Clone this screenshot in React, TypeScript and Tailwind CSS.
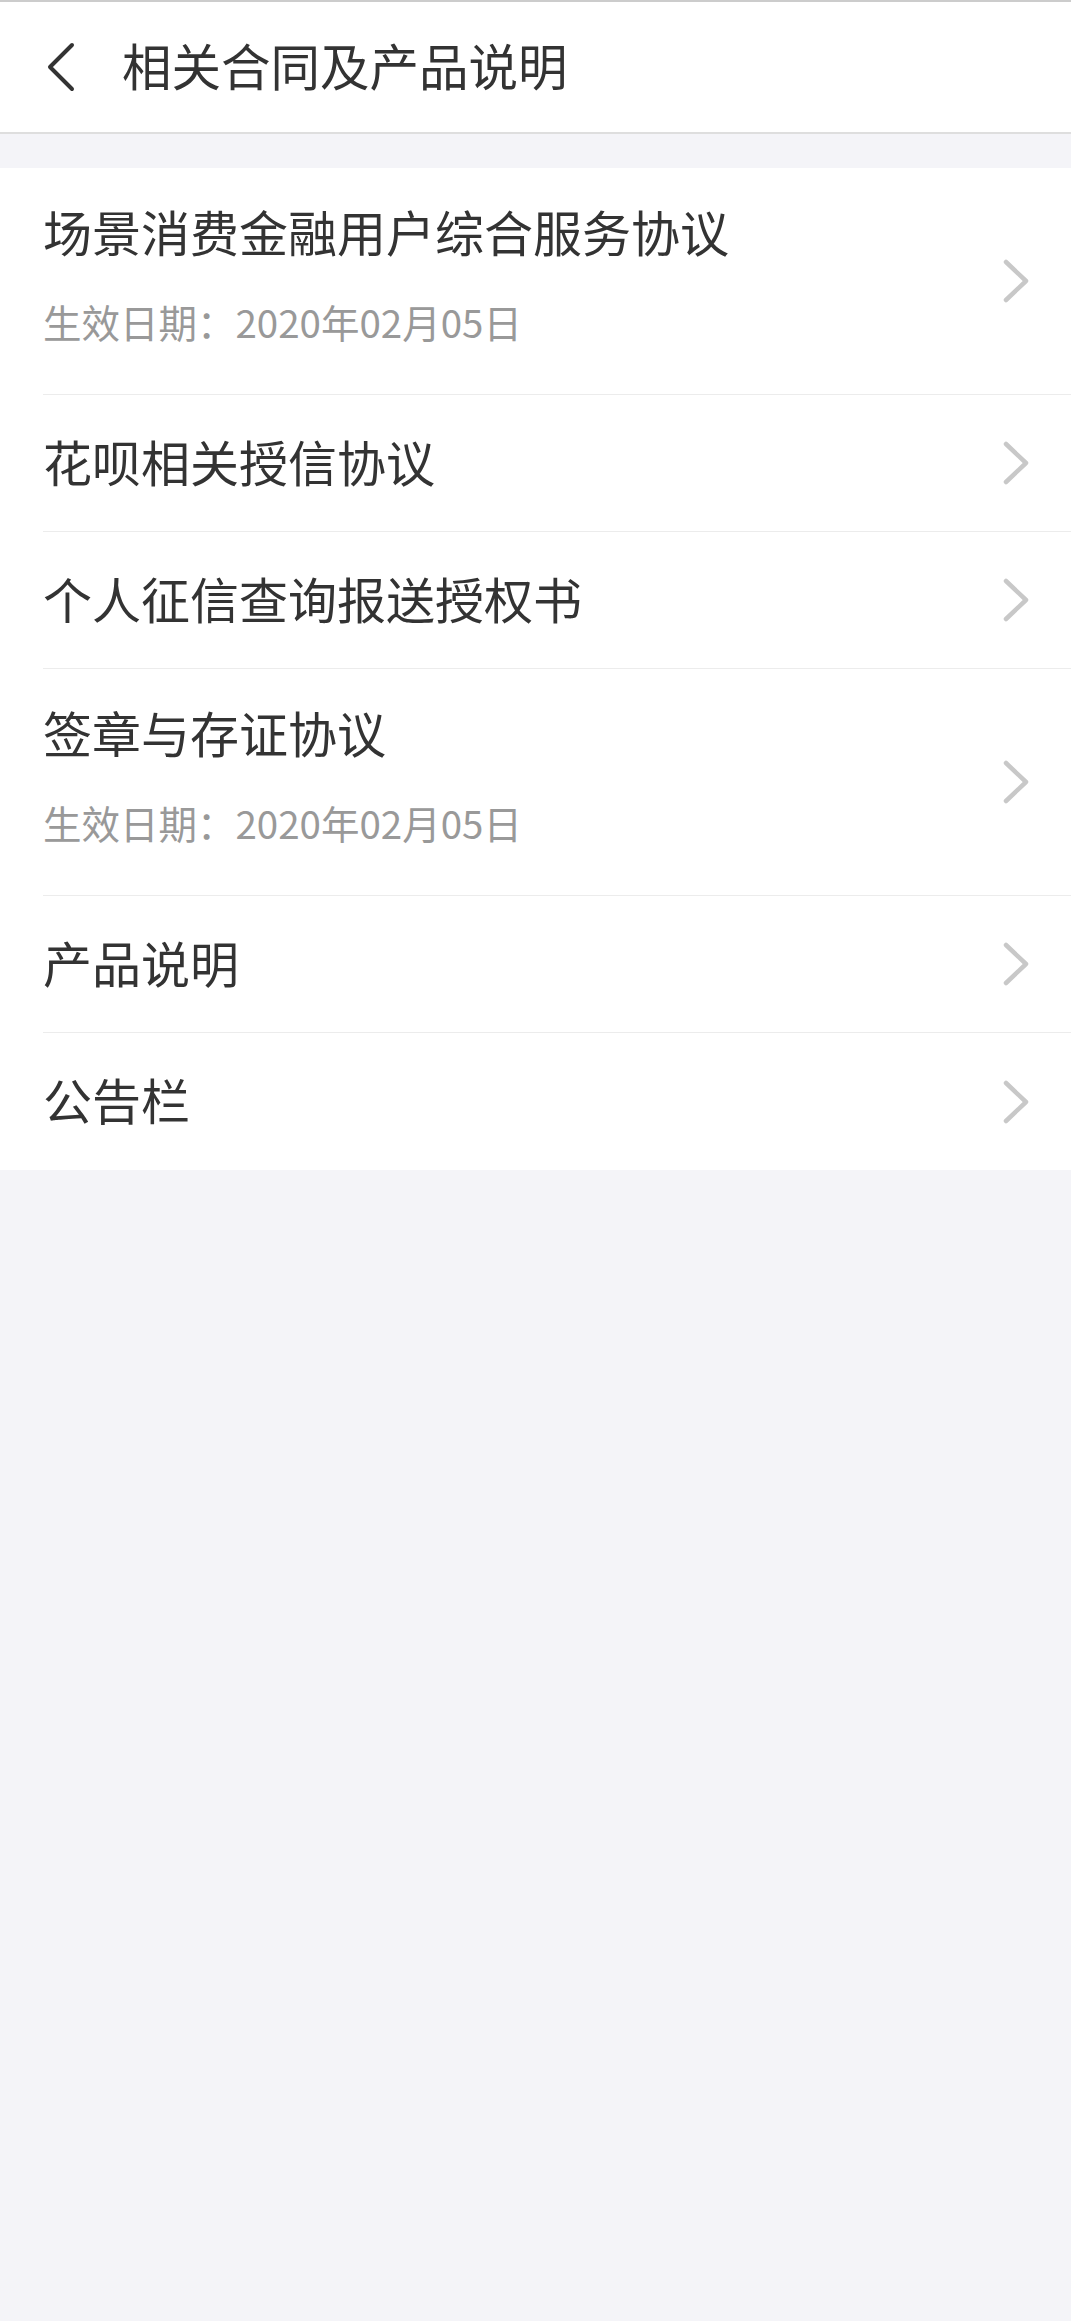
import React from 'react'

interface Doc {
  title: string
  date?: string
}

const docs: Doc[] = [
  { title: "场景消费金融用户综合服务协议", date: "生效日期：2020年02月05日" },
  { title: "花呗相关授信协议" },
  { title: "个人征信查询报送授权书" },
  { title: "签章与存证协议", date: "生效日期：2020年02月05日" },
  { title: "产品说明" },
  { title: "公告栏" },
]

const font = { fontFamily: '"Noto Sans CJK SC", "Noto Sans", sans-serif' }

const BackIcon = () =>
  <svg width="30" height="52" viewBox="0 0 30 52" fill="none">
    <polyline points="27,4 5,26 27,48" stroke="#333333" strokeWidth="4"
      strokeLinecap="round" strokeLinejoin="round" />
  </svg>

const ArrowIcon = () =>
  <svg width="30" height="46" viewBox="0 0 30 46" fill="none">
    <polyline points="5,4 25,23 5,42" stroke="#c8c8c8" strokeWidth="4.5"
      strokeLinecap="round" strokeLinejoin="round" />
  </svg>

const Row = (props: { doc: Doc, last: boolean }) => {
  const { doc, last } = props
  const border = last ? "" : "border-b border-[#ececec]"

  if (doc.date) return <div className={"ml-[43px] h-[227px] flex items-center pr-[40px] " + border}>
    <div className="flex-1 flex flex-col self-start pt-[35px]">
      <div className="text-[49px] leading-[56px] text-[#333333]" children={doc.title} />
      <div className="mt-[40px] text-[38.5px] leading-[44px] text-[#999999]" children={doc.date} />
    </div>
    <ArrowIcon />
  </div>

  return <div className={"ml-[43px] h-[137px] flex items-center pr-[40px] " + border}>
    <div className="flex-1 pb-[5px] text-[49px] leading-[56px] text-[#333333]" children={doc.title} />
    <ArrowIcon />
  </div>
}

export default function App() {
  return <div className="min-h-screen bg-[#f4f4f8]" style={font}>
    <div className="h-[134px] bg-white border-t-2 border-b-2 border-t-[#cccccc] border-b-[#dedede] flex items-center pl-[45px]">
      <BackIcon />
      <div className="ml-[47px] mb-[5px] text-[49.5px] leading-[56px] text-[#333333]" children="相关合同及产品说明" />
    </div>
    <div className="h-[34px]" />
    <div className="bg-white">
      {docs.map((doc, i) =>
        <Row key={doc.title} doc={doc} last={i === docs.length - 1} />)}
    </div>
  </div>
}
